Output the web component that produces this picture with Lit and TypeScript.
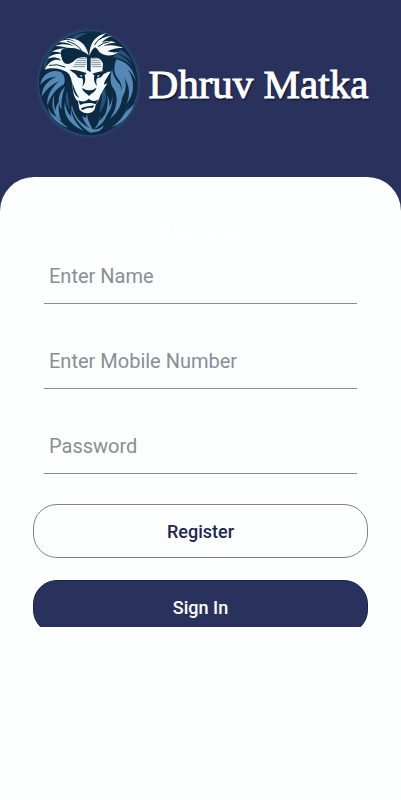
import { LitElement, html, css, svg } from "lit";
import { customElement } from "lit/decorators.js";

@customElement("lion-logo")
class LionLogo extends LitElement {
  static styles = css`
    :host { display: block; width: 115px; height: 120px; flex: none; }
    .lion { display: block; width: 100%; height: 100%; }
    .halo { fill: #285078; filter: blur(5px); }
    .base { fill: #0d2a43; }
    .mane { fill: #5488b5; }
    .deep { fill: #28527a; }
    .face { fill: #f4fafc; }
    .ink { fill: #0d2a43; }
    .cut { fill: none; stroke: #0d2a43; stroke-width: 3; stroke-linecap: round; }
    .fine { fill: none; stroke: #4c6478; stroke-width: 2; }
  `;

  render() {
    return html`
      <svg class="lion" viewBox="0 0 345 360" role="img" aria-label="Lion">
        ${svg`
        <ellipse class="halo" cx="176" cy="184" rx="152" ry="159" />
        <path class="base" d="M176 28C250 25 318 88 323 174C329 260 262 337 188 340C103 342 31 273 27 190C24 104 93 33 176 28Z" />
        <g class="mane">
          <path d="M92 150C62 140 36 159 31 188C44 173 60 165 78 164C51 177 36 195 35 224C48 202 64 188 88 177C65 197 49 221 52 250C63 219 79 200 102 187C107 172 103 158 92 150Z" />
          <path d="M73 218C60 247 70 278 94 298C86 277 84 258 88 237C79 250 76 258 76 268C71 250 71 235 73 218Z" />
          <path d="M105 194C83 214 82 240 94 263C93 239 96 219 105 194Z" />
          <path d="M52 255C60 284 84 307 115 318C95 303 80 289 71 268L79 286C67 279 59 268 52 255Z" />
          <path d="M105 239C97 275 119 309 161 326C137 304 123 281 124 257C131 285 149 312 181 332C211 330 220 320 221 309C210 321 197 325 185 321C151 307 131 279 126 249C123 260 121 272 124 284C112 272 106 257 105 239Z" />
          <path d="M259 112C250 137 251 153 263 169C279 188 279 213 267 239C287 216 293 190 282 164C300 194 301 219 289 246C315 216 316 176 293 142C304 152 312 163 318 178C309 139 292 120 259 112Z" />
          <path d="M246 140C240 166 239 184 252 202C267 225 260 263 239 291C273 266 287 223 269 187C255 172 249 158 246 140Z" />
          <path d="M298 241C290 272 272 298 244 316C276 305 303 278 312 246C303 257 294 264 286 270C291 260 295 251 298 241Z" />
          <path d="M246 220C251 246 239 272 221 291C232 262 236 241 231 219C239 234 239 244 238 254C245 242 247 231 246 220Z" />
          <path d="M207 279C211 294 204 309 191 322C219 307 231 288 231 267C225 280 216 290 207 297Z" />
          <path d="M156 282C165 305 174 316 191 328C179 306 173 292 171 277L167 288Z" />
        </g>
        <g class="deep">
          <path d="M270 82C288 92 300 106 307 122C294 108 278 98 262 94C282 105 298 118 306 134C291 117 269 108 248 106C258 98 266 92 270 82Z" />
          <path d="M72 80C53 98 43 118 39 143L48 132C53 110 60 96 72 80Z" />
          <path d="M112 206C102 224 107 245 121 264C116 243 115 227 112 206Z" />
          <path d="M225 202C234 230 222 259 207 273C213 248 217 228 216 207Z" />
          <path d="M128 43C145 34 160 32 174 33C157 39 145 46 133 55Z" />
        </g>
        <g class="face">
          <path d="M176 100C168 62 142 46 106 49C122 52 132 55 138 61C120 50 100 51 87 61C105 60 119 64 132 73C113 65 92 64 76 72C94 72 112 76 126 84C104 76 78 80 66 90C80 88 89 90 96 95C78 94 60 99 54 110C68 105 80 106 92 112C70 110 50 125 45 143C68 134 92 140 110 150C121 158 125 172 127 190C129 212 132 228 144 238L148 262C158 277 185 279 194 262L197 249L205 236C212 215 222 200 232 184L222 188C224 172 236 162 242 149L217 147L219 125C214 112 206 107 196 107L182 108V151L171 144V107C155 104 140 106 131 118C120 127 112 128 104 124C97 118 93 108 95 96C99 84 110 76 126 78C150 80 164 90 176 100Z" />
          <path d="M178 102C178 65 196 39 229 34C218 41 213 48 209 54C222 44 234 41 246 43C230 47 222 55 215 62C231 55 246 55 258 64C242 61 231 66 220 73C241 67 260 71 280 78C258 77 246 82 232 88C246 92 256 92 266 90C246 105 222 103 208 90C204 84 200 78 195 76C187 80 182 91 178 102Z" />
        </g>
        <g class="ink">
          <path d="M93 86C110 70 134 78 143 99C130 105 126 113 116 121C98 117 90 101 93 86Z" />
          <path d="M118 143C136 142 154 148 170 153L164 160C168 172 166 184 157 194C160 182 160 174 157 169L145 167L136 156Z" />
          <path d="M238 148C218 144 202 150 187 155L193 160C190 173 193 184 201 192C198 182 198 174 201 169L213 166L221 156Z" />
          <path d="M157 198C168 206 188 206 199 197C197 208 189 211 183 216L177 222L171 216C165 211 158 208 157 198Z" />
          <path d="M145 234C156 242 168 238 176 230C185 238 196 239 206 232L198 247C184 241 164 241 150 249Z" />
          <path d="M127 181C133 202 139 216 148 228C135 222 128 208 127 181Z" />
          <path d="M153 259C168 252 182 253 193 250L188 258C176 256 166 258 157 265Z" />
        </g>
        <g class="face">
          <path d="M149 159L158 161L154 165ZM200 162L210 159L205 165Z" />
          <path d="M162 200Q178 194 194 200L183 205H172Z" />
        </g>
        <g class="cut">
          <path d="M112 58Q139 64 154 84M70 108L90 114M58 130Q82 124 105 135" />
          <path d="M194 68Q202 53 216 46M205 73Q218 62 238 59M177 110V142" />
        </g>
        <path class="fine" d="M146 110H170M139 116H170M135 122H170M133 128H169M128 134H165M184 110H203M184 116H209M184 122H212M184 128H213M187 134H214" />`}
      </svg>
    `;
  }
}

@customElement("app-root")
class AppRoot extends LitElement {
  static styles = css`
    :host {
      display: block;
      min-height: 100vh;
      background: #fdfffe;
      font-family: Roboto, "Liberation Sans", sans-serif;
    }
    .top { background: #29325d; }
    .brand {
      display: flex;
      justify-content: center;
      align-items: center;
      gap: 4px;
      padding: 22px 3px 35px 0;
    }
    .name {
      margin: 0;
      padding-top: 4px;
      color: #fff;
      font: 400 41px/48px "Liberation Serif", serif;
      white-space: nowrap;
      -webkit-text-stroke: 1px #fff;
      text-shadow: 1px 2px 2px #10142e;
    }
    .card {
      background: #fdfffe;
      border-radius: 34px 34px 0 0;
      padding: 40px 33px 0;
    }
    .heading {
      margin: 0;
      color: #fff;
      font-size: 24px;
      line-height: 32px;
      font-weight: 500;
      text-align: center;
    }
    .form { display: flex; flex-direction: column; }
    .fields {
      display: flex;
      flex-direction: column;
      gap: 30px;
      padding: 0 11px;
      margin-bottom: 30px;
    }
    .field {
      box-sizing: border-box;
      width: 100%;
      height: 55px;
      padding: 0 5px;
      border: 0;
      border-bottom: 1px solid #858b93;
      border-radius: 0;
      background: transparent;
      color: #29325d;
      font: 400 20px/24px Roboto, sans-serif;
      outline: none;
    }
    .field::placeholder { color: #868f96; opacity: 1; }
    .actions {
      display: flex;
      flex-direction: column;
      gap: 22px;
      height: 123px;
      overflow: hidden;
    }
    .btn {
      flex: none;
      box-sizing: border-box;
      height: 54px;
      padding: 2px 0 0;
      border: 1px solid #7d8197;
      border-radius: 24px;
      background: transparent;
      color: #202852;
      font: 500 18px/24px Roboto, sans-serif;
      cursor: pointer;
    }
    .primary { background: #29325d; border-color: #1b2350; color: #fff; }
  `;

  render() {
    return html`
      <div class="top">
        <header class="brand">
          <lion-logo></lion-logo>
          <p class="name">Dhruv Matka</p>
        </header>
        <main class="card">
          <h1 class="heading">Register</h1>
          <form class="form" @submit=${(e: Event) => e.preventDefault()}>
            <div class="fields">
              <input class="field" type="text" placeholder="Enter Name" aria-label="Enter Name" />
              <input class="field" type="tel" placeholder="Enter Mobile Number" aria-label="Enter Mobile Number" />
              <input class="field" type="password" placeholder="Password" aria-label="Password" />
            </div>
            <div class="actions">
              <button class="btn" type="submit">Register</button>
              <button class="btn primary" type="button">Sign In</button>
            </div>
          </form>
        </main>
      </div>
    `;
  }
}
